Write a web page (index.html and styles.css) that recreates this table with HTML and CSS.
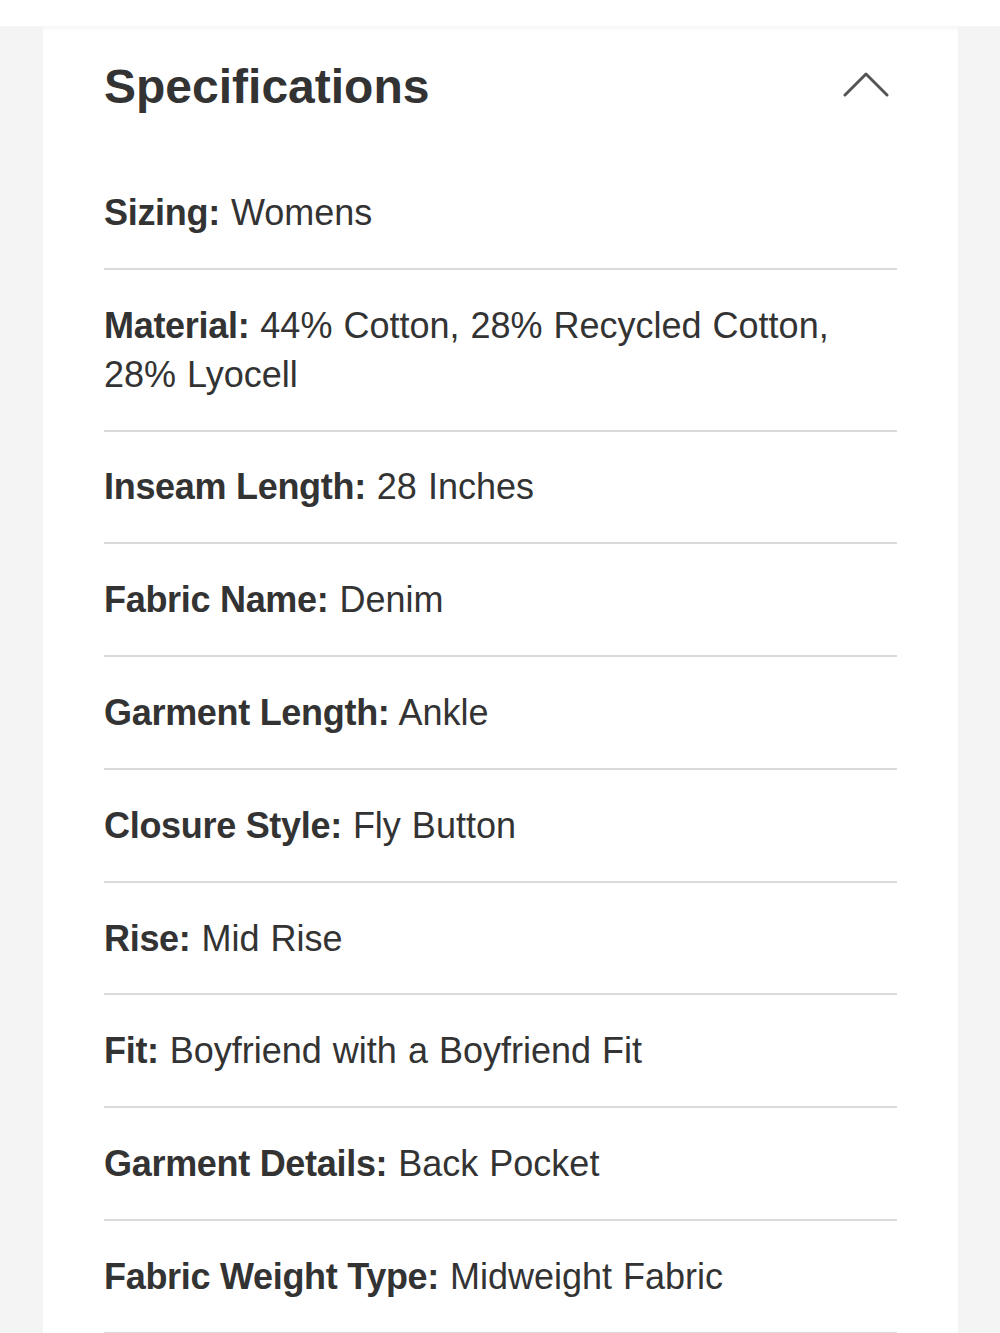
FILE: index.html
```html
<!DOCTYPE html>
<html lang="en">
<head>
    <meta charset="UTF-8">
    <meta name="viewport" content="width=device-width, initial-scale=1.0">
    <title>Specifications</title>
    <link rel="stylesheet" href="styles.css">
</head>
<body>
    <div class="page">
        <div class="card">
            <div class="cardHeader">
                <h2>Specifications</h2>
                <svg class="chevron" width="46" height="28" viewBox="0 0 46 28">
                    <polyline points="2,25 23,4 44,25" fill="none" stroke="#555" stroke-width="3" stroke-linecap="round" stroke-linejoin="round"/>
                </svg>
            </div>

            <div class="specRow"><b>Sizing:</b> Womens</div>
            <div class="specRow"><b>Material:</b> 44% Cotton, 28% Recycled Cotton, 28% Lyocell</div>
            <div class="specRow"><b>Inseam Length:</b> 28 Inches</div>
            <div class="specRow"><b>Fabric Name:</b> Denim</div>
            <div class="specRow"><b>Garment Length:</b> Ankle</div>
            <div class="specRow"><b>Closure Style:</b> Fly Button</div>
            <div class="specRow"><b>Rise:</b> Mid Rise</div>
            <div class="specRow"><b>Fit:</b> Boyfriend with a Boyfriend Fit</div>
            <div class="specRow"><b>Garment Details:</b> Back Pocket</div>
            <div class="specRow"><b>Fabric Weight Type:</b> Midweight Fabric</div>
        </div>
    </div>
</body>
</html>
```

FILE: styles.css
```css
html, body {
    margin: 0;
    background-color: #fff;
    color: #333;
    font-family: "Liberation Sans", Arial, sans-serif;
}

.page {
    margin-top: 26px;
    background-color: #f4f4f4;
    padding: 0 42px 0 43px;
}

.card {
    background-color: #fff;
    padding: 0 61px;
    box-shadow: inset 0 6px 6px -4px rgba(0, 0, 0, 0.05);
}

.cardHeader {
    display: flex;
    justify-content: space-between;
    align-items: center;
    padding: 33px 8px 42px 0;
}

.cardHeader h2 {
    margin: 0;
    font-size: 48px;
    line-height: 56px;
    font-weight: bold;
}

.chevron {
    display: block;
    margin-top: -6px;
}

.specRow {
    font-size: 36px;
    line-height: 49px;
    padding: 30.9px 0;
    border-bottom: 2px solid #dadada;
    word-spacing: 1px;
}

.specRow b {
    font-weight: bold;
    word-spacing: 0;
    letter-spacing: -0.3px;
}
```
